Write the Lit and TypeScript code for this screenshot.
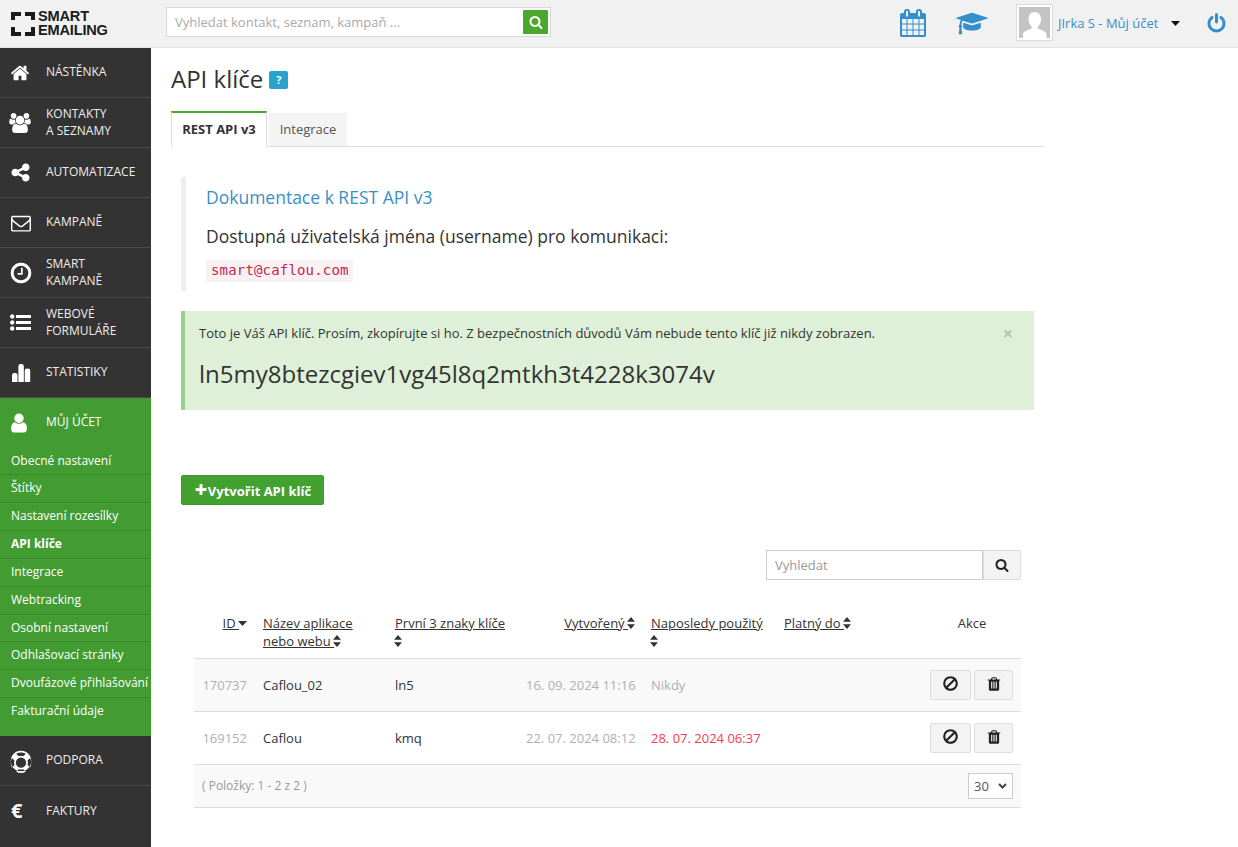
import { LitElement, html, css, svg } from "lit";
import { customElement } from "lit/decorators.js";

const P: Record<string, string> = {
  home: "M1472 992v480q0 26-19 45t-45 19h-384v-384h-256v384h-384q-26 0-45-19t-19-45v-480q0-1 .5-3t.5-3l575-474 575 474q1 2 1 6zm223-69l-62 74q-8 9-21 11h-3q-13 0-21-7l-692-577-692 577q-12 8-24 7-13-2-21-11l-62-74q-8-10-7-23.5t11-21.5l719-599q32-26 76-26t76 26l244 204v-195q0-14 9-23t23-9h192q14 0 23 9t9 23v408l219 182q10 8 11 21.5t-7 23.5z",
  search: "M1216 832q0-185-131.500-316.500t-316.500-131.500-316.500 131.500-131.500 316.500 131.500 316.500 316.500 131.500 316.500-131.500 131.500-316.500zm512 832q0 52-38 90t-90 38q-54 0-90-38l-343-342q-179 124-399 124-143 0-273.500-55.500t-225-150-150-225-55.500-273.500 55.500-273.500 150-225 225-150 273.500-55.500 273.500 55.500 225 150 150 225 55.500 273.500q0 220-124 399l343 343q37 37 37 90z",
  users: "M529 896q-162 5-265 128h-134q-82 0-138-40.500t-56-118.500q0-353 124-353 6 0 43.500 21t97.500 42.500 119 21.500q67 0 133-23-5 37-5 66 0 139 81 256zm1071 637q0 120-73 189.500t-194 69.500h-874q-121 0-194-69.500t-73-189.500q0-53 3.500-103.500t14-109 26.500-108.500 43-97.500 62-81 85.500-53.500 111.500-20q10 0 43 21.500t73 48 107 48 135 21.500 135-21.500 107-48 73-48 43-21.500q61 0 111.500 20t85.500 53.500 62 81 43 97.500 26.500 108.500 14 109 3.500 103.500zm-1024-1277q0 106-75 181t-181 75-181-75-75-181 75-181 181-75 181 75 75 181zm704 384q0 159-112.500 271.500t-271.500 112.500-271.500-112.500-112.500-271.500 112.500-271.500 271.500-112.500 271.500 112.500 112.500 271.500zm576 225q0 78-56 118.500t-138 40.500h-134q-103-123-265-128 81-117 81-256 0-29-5-66 66 23 133 23 59 0 119-21.500t97.500-42.500 43.500-21q124 0 124 353zm-128-609q0 106-75 181t-181 75-181-75-75-181 75-181 181-75 181 75 75 181z",
  share: "M1344 1024q133 0 226.500 93.500t93.500 226.500-93.500 226.500-226.500 93.500-226.500-93.500-93.500-226.500q0-12 2-34l-360-180q-92 86-218 86-133 0-226.500-93.500t-93.500-226.500 93.500-226.500 226.500-93.500q126 0 218 86l360-180q-2-22-2-34 0-133 93.500-226.500t226.500-93.500 226.500 93.500 93.500 226.500-93.500 226.500-226.500 93.500q-126 0-218-86l-360 180q2 22 2 34t-2 34l360 180q92-86 218-86z",
  envelope: "M1664 1504v-768q-32 36-69 66-268 206-426 338-51 43-83 67t-86.500 48.500-102.500 24.500h-2q-48 0-102.500-24.500t-86.500-48.500-83-67q-158-132-426-338-37-30-69-66v768q0 13 9.500 22.500t22.500 9.500h1472q13 0 22.500-9.500t9.500-22.500zm0-1051v-24.500l-.5-13-3-12.500-5.500-9-9-7.500-14-2.500h-1472q-13 0-22.500 9.500t-9.500 22.500q0 168 147 284 193 152 401 317 6 5 35 29.500t46 37.500 44.500 31.500 50.500 27.500 43 9h2q20 0 43-9t50.500-27.500 44.500-31.500 46-37.500 35-29.500q208-165 401-317 54-43 100.500-115.500t46.500-131.500zm128-37v1088q0 66-47 113t-113 47h-1472q-66 0-113-47t-47-113v-1088q0-66 47-113t113-47h1472q66 0 113 47t47 113z",
  clock: "M1024 544v448q0 14-9 23t-23 9h-320q-14 0-23-9t-9-23v-64q0-14 9-23t23-9h224v-352q0-14 9-23t23-9h64q14 0 23 9t9 23zm416 352q0-148-73-273t-198-198-273-73-273 73-198 198-73 273 73 273 198 198 273 73 273-73 198-198 73-273zm224 0q0 209-103 385.500t-279.500 279.500-385.500 103-385.500-103-279.500-279.500-103-385.500 103-385.500 279.500-279.500 385.500-103 385.500 103 279.500 279.500 103 385.500z",
  list: "M384 1408q0 80-56 136t-136 56-136-56-56-136 56-136 136-56 136 56 56 136zm0-512q0 80-56 136t-136 56-136-56-56-136 56-136 136-56 136 56 56 136zm1408 416v192q0 13-9.500 22.500t-22.500 9.500h-1216q-13 0-22.500-9.500t-9.500-22.500v-192q0-13 9.500-22.500t22.500-9.500h1216q13 0 22.500 9.500t9.500 22.500zm-1408-928q0 80-56 136t-136 56-136-56-56-136 56-136 136-56 136 56 56 136zm1408 416v192q0 13-9.500 22.500t-22.500 9.500h-1216q-13 0-22.500-9.500t-9.500-22.500v-192q0-13 9.500-22.500t22.500-9.500h1216q13 0 22.500 9.500t9.500 22.500zm0-512v192q0 13-9.500 22.500t-22.500 9.500h-1216q-13 0-22.500-9.500t-9.500-22.500v-192q0-13 9.500-22.500t22.500-9.500h1216q13 0 22.500 9.500t9.500 22.500z",
  stats: "M180 1100q0-200 200-200h90q200 0 200 200v600H180zM750 300q0-200 200-200h90q200 0 200 200v1400H750zM1320 700q0-200 200-200h90q200 0 200 200v1000h-490z",
  user: "M1536 1399q0 109-62.500 187t-150.500 78h-854q-88 0-150.500-78t-62.500-187q0-85 8.500-160.500t31.500-152 58.500-131 94-89 134.500-34.500q131 128 313 128t313-128q76 0 134.500 34.500t94 89 58.500 131 31.500 152 8.500 160.500zm-256-887q0 159-112.500 271.500t-271.500 112.500-271.500-112.500-112.500-271.500 112.500-271.500 271.500-112.500 271.500 112.500 112.500 271.500z",
  ring: "M896 128q209 0 385.500 103t279.500 279.500 103 385.500-103 385.500-279.500 279.500-385.500 103-385.500-103-279.500-279.500-103-385.500 103-385.500 279.500-279.500 385.500-103zm0 128q-190 0-361 90l194 194q82-28 167-28t167 28l194-194q-171-90-361-90zm-678 1129l194-194q-28-82-28-167t28-167l-194-194q-90 171-90 361t90 361zm678 407q190 0 361-90l-194-194q-82 28-167 28t-167-28l-194 194q171 90 361 90zm0-384q159 0 271.500-112.500t112.500-271.500-112.500-271.500-271.500-112.500-271.500 112.500-112.500 271.500 112.500 271.500 271.500 112.500zm484-217l194 194q90-171 90-361t-90-361l-194 194q28 82 28 167t-28 167z",
  ban: "M1440 893q0-161-87-295l-754 753q137 89 297 89 111 0 211.500-43.500t173.500-116.500 116-174.500 43-212.500zm-999 299l755-754q-135-91-300-91-148 0-273 73t-198 199-73 274q0 162 89 299zm1223-299q0 157-61 300t-163.500 246-245 164-298.500 61-298.500-61-245-164-163.500-246-61-300 61-299.500 163.500-245.500 245-164 298.500-61 298.500 61 245 164 163.500 245.500 61 299.500z",
  trash: "M704 1376v-704q0-14-9-23t-23-9h-64q-14 0-23 9t-9 23v704q0 14 9 23t23 9h64q14 0 23-9t9-23zm256 0v-704q0-14-9-23t-23-9h-64q-14 0-23 9t-9 23v704q0 14 9 23t23 9h64q14 0 23-9t9-23zm256 0v-704q0-14-9-23t-23-9h-64q-14 0-23 9t-9 23v704q0 14 9 23t23 9h64q14 0 23-9t9-23zm-544-992h448l-48-117q-7-9-17-11h-317q-10 2-17 11zm928 32v64q0 14-9 23t-23 9h-96v948q0 83-47 143.500t-113 60.500h-832q-66 0-113-58.500t-47-141.500v-952h-96q-14 0-23-9t-9-23v-64q0-14 9-23t23-9h309l70-167q15-37 54-63t79-26h320q40 0 79 26t54 63l70 167h309q14 0 23 9t9 23z",
  calendar: "M192 1664h288v-288h-288v288zm352 0h320v-288h-320v288zm-352-352h288v-320h-288v320zm352 0h320v-320h-320v320zm-352-384h288v-288h-288v288zm736 736h320v-288h-320v288zm-384-736h320v-288h-320v288zm768 736h288v-288h-288v288zm-384-352h320v-320h-320v320zm-352-864v-288q0-13-9.500-22.500t-22.500-9.500h-64q-13 0-22.500 9.500t-9.500 22.500v288q0 13 9.500 22.500t22.500 9.500h64q13 0 22.500-9.500t9.500-22.500zm736 864h288v-320h-288v320zm-384-384h320v-288h-320v288zm384 0h288v-288h-288v288zm32-480v-288q0-13-9.500-22.500t-22.500-9.500h-64q-13 0-22.500 9.500t-9.500 22.500v288q0 13 9.500 22.500t22.500 9.500h64q13 0 22.500-9.500t9.500-22.500zm384-64v1280q0 52-38 90t-90 38h-1408q-52 0-90-38t-38-90v-1280q0-52 38-90t90-38h128v-96q0-66 47-113t113-47h64q66 0 113 47t47 113v96h384v-96q0-66 47-113t113-47h64q66 0 113 47t47 113v96h128q52 0 90 38t38 90z",
  power: "M1664 896q0 156-61 298t-164 245-245 164-298 61-298-61-245-164-164-245-61-298q0-182 80.500-343t226.500-270q43-32 95.500-25t83.500 50q32 42 24.500 94.500t-49.500 84.500q-98 74-151.500 181t-53.500 228q0 104 40.500 198.500t109.500 163.500 163.500 109.500 198.500 40.500 198.500-40.500 163.500-109.500 109.500-163.500 40.500-198.500q0-121-53.500-228t-151.500-181q-42-32-49.500-84.500t24.500-94.500q31-43 84-50t95 25q146 109 226.500 270t80.500 343zm-640-768v640q0 52-38 90t-90 38-90-38-38-90v-640q0-52 38-90t90-38 90 38 38 90z",
  plus: "M1600 736v192q0 40-28 68t-68 28h-416v416q0 40-28 68t-68 28h-192q-40 0-68-28t-28-68v-416h-416q-40 0-68-28t-28-68v-192q0-40 28-68t68-28h416v-416q0-40 28-68t68-28h192q40 0 68 28t28 68v416h416q40 0 68 28t28 68z",
};
const CAP = "M1774 836l18 316q4 69-82 128t-235 93.500-323 34.500-323-34.500-235-93.500-82-128l18-316 574 181q22 7 48 7t48-7zm530-324q0 23-22 31l-1120 352q-4 1-10 1t-10-1l-652-206q-43 34-71 111.500t-34 178.500q63 36 63 109 0 69-58 107l58 433q2 14-8 25-9 11-24 11h-192q-15 0-24-11-10-11-8-25l58-433q-58-38-58-107 0-73 65-111 11-207 98-330l-333-104q-22-8-22-31t22-31l1120-352q4-1 10-1t10 1l1120 352q22 8 22 31z";

const icon = (name: string, cls = "") =>
  html`<svg class="ic ${cls}" viewBox="0 0 1792 1792" aria-hidden="true">${svg`<path fill="currentColor" d=${P[name]}></path>`}</svg>`;

const sortBoth = html`<svg class="sort" viewBox="0 0 8 12" aria-hidden="true"><path fill="currentColor" d="M4 0l4 4.700H0zM4 12L0 7.300h8z"></path></svg>`;
const sortDown = html`<svg class="sortd" viewBox="0 0 9 5" aria-hidden="true"><path fill="currentColor" d="M0 0h9L4.500 5z"></path></svg>`;

const TOP = [
  ["home", "s20", ["NÁSTĚNKA"]],
  ["users", "s20", ["KONTAKTY", "A SEZNAMY"]],
  ["share", "s21", ["AUTOMATIZACE"]],
  ["envelope", "s20 nudge", ["KAMPANĚ"]],
  ["clock", "s24", ["SMART", "KAMPANĚ"]],
  ["list", "s21", ["WEBOVÉ", "FORMULÁŘE"]],
  ["stats", "s20", ["STATISTIKY"]],
] as [string, string, string[]][];

const SUB = ["Obecné nastavení", "Štítky", "Nastavení rozesílky", "API klíče", "Integrace", "Webtracking", "Osobní nastavení", "Odhlašovací stránky", "Dvoufázové přihlašování", "Fakturační údaje"];

const ROWS = [
  { id: "170737", name: "Caflou_02", key: "ln5", created: "16. 09. 2024 11:16", used: "Nikdy", red: false },
  { id: "169152", name: "Caflou", key: "kmq", created: "22. 07. 2024 08:12", used: "28. 07. 2024 06:37", red: true },
];

@customElement("app-root")
export class AppRoot extends LitElement {
  static styles = css`
    :host { display: block; height: 847px; overflow: hidden; background: #fff; color: #333; font-family: "Open Sans", sans-serif; font-size: 13px; line-height: 18px; }
    * { box-sizing: border-box; }
    .ic { display: block; flex: none; overflow: visible; }
    .top { height: 48px; background: #f1f1f1; border-bottom: 1px solid #e2e2e2; display: flex; align-items: center; }
    .logo { width: 166px; padding: 0 0 0 11px; display: flex; align-items: center; gap: 3px; flex: none; color: #1b1b1b; }
    .logo svg { width: 24px; height: 24px; flex: none; }
    .logo div { font: bold 14.600px/13.500px "Liberation Sans", Arial, sans-serif; letter-spacing: -0.2px; }
    .tsearch { width: 385px; height: 30px; background: #fff; border: 1px solid #d8d8d8; display: flex; align-items: center; justify-content: space-between; padding: 0 2px 0 8px; flex: none; margin-top: -3px; color: #aaa; font-size: 13px; }
    .gbtn { width: 25px; height: 24px; background: #4aa82f; color: #fff; display: flex; align-items: center; justify-content: center; border-radius: 1px; }
    .gbtn .ic { width: 14px; height: 14px; }
    .tright { margin-left: auto; display: flex; align-items: center; color: #3390cc; margin-top: -1px; }
    .tright .cal { width: 28px; height: 28px; margin-right: 29px; margin-top: -1px; }
    .cap { width: 32px; height: 25px; margin-right: 28px; }
    .avatar { width: 37px; height: 37px; margin-top: -1px; border: 1px solid #dcdcdc; padding: 2px; background: #fff; }
    .avatar svg { display: block; width: 31px; height: 31px; }
    .uname { margin: -1px 0 0 5px; width: 113px; font-size: 13px; color: #3a8fc8; }
    .caret { width: 9px; height: 5px; color: #111; margin-right: 26px; }
    .caret svg { display: block; width: 9px; height: 5px; }
    .pw { width: 21px; height: 21px; margin-right: 11px; }

    .body { display: flex; }
    .side { width: 151px; height: 799px; background: #333; flex: none; color: #eee; font-size: 12px; line-height: 17px; }
    .item { height: 50px; border-bottom: 1px solid #484848; display: flex; align-items: center; padding: 0; }
    .item.last { border-bottom: 0; padding-top: 1px; }
    .iw { width: 46px; padding-left: 10px; flex: none; color: #fff; display: flex; align-items: center; }
    .lbl { margin-bottom: 3px; }
    .lbl.two { margin-bottom: 1px; }
    .s20 { width: 20px; height: 20px; }
    .s21 { width: 21px; height: 21px; }
    .s22 { width: 22px; height: 22px; margin-left: -2px; }
    .s24 { width: 24px; height: 24px; margin-left: -1px; }
    .nudge { margin-left: 1px; }
    .eur { font-size: 20px; font-weight: 700; line-height: 22px; padding-left: 1px; margin-bottom: 2px; }
    .green { background: #439c32; height: 338px; color: #fff; }
    .green .item { border-bottom: 0; height: 49.500px; }
    .subitem { height: 27.850px; border-bottom: 1px solid #3a8a2b; padding-left: 11px; font-size: 12px; line-height: 26.600px; white-space: nowrap; }
    .subitem.last { border-bottom: 0; }
    .subitem.on { font-weight: 700; }

    .main { width: 873px; margin-left: 20px; }
    h1 { margin: 14px 0 16px; height: 33px; font-weight: 400; font-size: 24px; line-height: 33px; color: #333; display: flex; align-items: center; gap: 6px; }
    .help { width: 19px; height: 18px; background: #27a3cc; color: #fff; font-size: 11px; font-weight: 700; line-height: 18px; text-align: center; border-radius: 2px; margin-top: 3px; }
    .tabs { height: 36px; border-bottom: 1px solid #ddd; display: flex; gap: 2px; }
    .tab { height: 36px; width: 96px; background: #fff; border-top: 2px solid #4aa82f; border-left: 1px solid #ddd; border-right: 1px solid #ddd; font-weight: 700; font-size: 13px; line-height: 33px; text-align: center; color: #333; }
    .tab.off { width: 78px; height: 33px; margin-top: 2px; background: #f4f4f4; border: 0; font-weight: 400; color: #555; font-size: 13px; line-height: 33px; }
    .content { padding: 0 10px; }
    .quote { margin-top: 30px; height: 114px; border-left: 5px solid #eee; padding: 10px 0 0 20px; }
    .quote a { display: block; font-size: 17.500px; line-height: 21px; color: #3a8fc8; }
    .quote p { margin: 18px 0 0; font-size: 17.500px; line-height: 21px; color: #333; }
    code { display: inline-block; margin-top: 13px; height: 22px; padding: 0 4px 0 5px; background: #f9f2f4; color: #c7254e; font-family: "DejaVu Sans Mono", monospace; font-size: 14px; line-height: 21px; letter-spacing: 0.17px; }
    .alert { position: relative; margin-top: 20px; height: 99px; background: #dff0d8; border-left: 4px solid #9bd08a; padding: 13px 14px; color: #333; font-size: 13px; }
    .alert .key { margin-top: 15px; font-size: 24px; line-height: 33px; }
    .close { position: absolute; right: 21px; top: 13px; color: #b5c2b0; font-size: 18px; font-weight: 700; line-height: 18px; }
    .create { margin-top: 65px; width: 143px; height: 30px; padding-top: 1px; background: #43a132; border: 1px solid #3c9a2c; border-radius: 2px; color: #fff; font-weight: 700; font-size: 13px; display: flex; align-items: center; justify-content: center; gap: 0; }
    .create .ic { width: 14px; height: 14px; margin-top: -1px; }
    .filter { margin: 45px 13px 0 0; display: flex; justify-content: flex-end; }
    .fin { width: 217px; height: 30px; border: 1px solid #ccc; padding-left: 8px; line-height: 28px; color: #999; font-size: 13px; }
    .fbtn { width: 38px; height: 30px; background: #f3f3f3; border: 1px solid #ddd; border-radius: 0 2px 2px 0; display: flex; align-items: center; justify-content: center; color: #222; }
    .fbtn .ic { width: 14px; height: 14px; }
    table { margin: 20px 0 0 13px; width: 827px; table-layout: fixed; border-collapse: collapse; font-size: 13px; }
    th { font-weight: 400; text-align: left; vertical-align: top; height: 58px; padding: 14px 8px 0; border-bottom: 1px solid #ddd; color: #333; }
    th span { text-decoration: underline; }
    th.r, td.r { text-align: right; }
    th.c { text-align: center; }
    .sort { display: inline-block; width: 8px; height: 12px; vertical-align: -1px; margin-left: -1px; color: #333; }
    .sortd { display: inline-block; width: 9px; height: 5px; vertical-align: 2px; margin-left: -1px; color: #333; }
    td { height: 53px; padding: 0 8px; border-bottom: 1px solid #ddd; color: #333; white-space: nowrap; }
    tr.odd td { background: #f9f9f9; }
    td.mut { color: #b0b0b0; }
    td.red { color: #f63a4f; }
    td.ac { padding-left: 0; }
    .acts { display: flex; justify-content: flex-end; gap: 3px; }
    .act { width: 41px; height: 30px; background: #f3f3f3; border: 1px solid #ddd; border-radius: 2px; display: flex; align-items: center; justify-content: center; color: #222; }
    .act.t { width: 39px; }
    .act .ic { width: 17px; height: 17px; margin-top: -2px; }
    .act.t .ic { width: 16px; height: 16px; }
    tr.foot td { height: 43px; background: #f9f9f9; }
    .count { color: #999; font-size: 12px; }
    .foot-in { display: flex; align-items: center; justify-content: space-between; }
    .sel { width: 45px; height: 26px; border: 1px solid #ccc; background: #fff; display: flex; align-items: center; justify-content: space-between; padding: 0 5px 0 5px; color: #555; font-size: 13px; }
    .sel svg { width: 9px; height: 6px; display: block; }
  `;

  render() {
    return html`
      <div class="top">
        <div class="logo">
          <svg viewBox="0 0 24 24" aria-hidden="true"><path fill="#1b1b1b" d="M0 0h10v4H4v4H0zM14 0h10v8h-4V4h-6zM0 15h4v5h6v4H0zM20 15h4v9H14v-4h6z"></path></svg>
          <div>SMART<br />EMAILING</div>
        </div>
        <div class="tsearch"><span>Vyhledat kontakt, seznam, kampaň ...</span><div class="gbtn">${icon("search")}</div></div>
        <div class="tright">
          ${icon("calendar", "cal")}
          <svg class="ic cap" viewBox="0 0 2304 1792" aria-hidden="true"><path fill="currentColor" d=${CAP}></path></svg>
          <div class="avatar"><svg viewBox="0 0 31 31" aria-hidden="true"><rect width="31" height="31" fill="#c4c4c4"></rect><path fill="#fff" d="M15.500 5c4 0 6.500 3.200 6.500 7.200 0 3.300-1.400 5.800-3.200 7.300v2c3 1.500 8 2.500 8.700 5.500V31H4v-4c.7-3 5.700-4 8.700-5.500v-2C10.900 18 9.500 15.500 9.500 12.200 9.500 8.200 11.500 5 15.500 5z"></path></svg></div>
          <div class="uname">JIrka S - Můj účet</div>
          <div class="caret"><svg viewBox="0 0 9 5" aria-hidden="true"><path fill="currentColor" d="M0 0h9L4.500 5z"></path></svg></div>
          ${icon("power", "pw")}
        </div>
      </div>
      <div class="body">
        <nav class="side">
          ${TOP.map(([ic, size, lines]) => html`<div class="item"><span class="iw">${icon(ic, size)}</span><div class="lbl ${lines.length > 1 ? "two" : ""}">${lines.map((l, i) => html`${i ? html`<br />` : ""}${l}`)}</div></div>`)}
          <div class="green">
            <div class="item"><span class="iw">${icon("user", "s22")}</span><div class="lbl">MŮJ ÚČET</div></div>
            ${SUB.map((s, i) => html`<div class="subitem ${s === "API klíče" ? "on" : ""} ${i === SUB.length - 1 ? "last" : ""}">${s}</div>`)}
          </div>
          <div class="item"><span class="iw">${icon("ring", "s24")}</span><div class="lbl">PODPORA</div></div>
          <div class="item last"><span class="iw"><span class="eur">€</span></span><div class="lbl">FAKTURY</div></div>
        </nav>
        <main class="main">
          <h1>API klíče <span class="help">?</span></h1>
          <div class="tabs"><div class="tab">REST API v3</div><div class="tab off">Integrace</div></div>
          <div class="content">
            <div class="quote">
              <a>Dokumentace k REST API v3</a>
              <p>Dostupná uživatelská jména (username) pro komunikaci:</p>
              <code>smart@caflou.com</code>
            </div>
            <div class="alert">
              <div>Toto je Váš API klíč. Prosím, zkopírujte si ho. Z bezpečnostních důvodů Vám nebude tento klíč již nikdy zobrazen.</div>
              <div class="key">ln5my8btezcgiev1vg45l8q2mtkh3t4228k3074v</div>
              <span class="close">×</span>
            </div>
            <div class="create">${icon("plus")}Vytvořit API klíč</div>
            <div class="filter"><div class="fin">Vyhledat</div><div class="fbtn">${icon("search")}</div></div>
            <table>
              <colgroup><col style="width:61px" /><col style="width:132px" /><col style="width:131px" /><col style="width:125px" /><col style="width:133px" /><col style="width:147px" /><col style="width:98px" /></colgroup>
              <thead>
                <tr>
                  <th class="r"><span>ID </span>${sortDown}</th>
                  <th><span>Název aplikace nebo webu </span>${sortBoth}</th>
                  <th><span>První 3 znaky klíče </span>${sortBoth}</th>
                  <th class="r"><span>Vytvořený </span>${sortBoth}</th>
                  <th><span>Naposledy použitý </span>${sortBoth}</th>
                  <th><span>Platný do </span>${sortBoth}</th>
                  <th class="c">Akce</th>
                </tr>
              </thead>
              <tbody>
                ${ROWS.map((r, i) => html`<tr class=${i === 0 ? "odd" : ""}>
                  <td class="r mut">${r.id}</td><td>${r.name}</td><td>${r.key}</td>
                  <td class="r mut">${r.created}</td><td class=${r.red ? "red" : "mut"}>${r.used}</td><td></td>
                  <td class="ac"><div class="acts"><div class="act">${icon("ban")}</div><div class="act t">${icon("trash")}</div></div></td>
                </tr>`)}
                <tr class="foot"><td colspan="7"><div class="foot-in"><span class="count">( Položky: 1 - 2 z 2 )</span><div class="sel"><span>30</span><svg viewBox="0 0 9 6" aria-hidden="true"><path fill="none" stroke="#444" stroke-width="2" d="M1 1l3.500 3.500L8 1"></path></svg></div></div></td></tr>
              </tbody>
            </table>
          </div>
        </main>
      </div>
    `;
  }
}
